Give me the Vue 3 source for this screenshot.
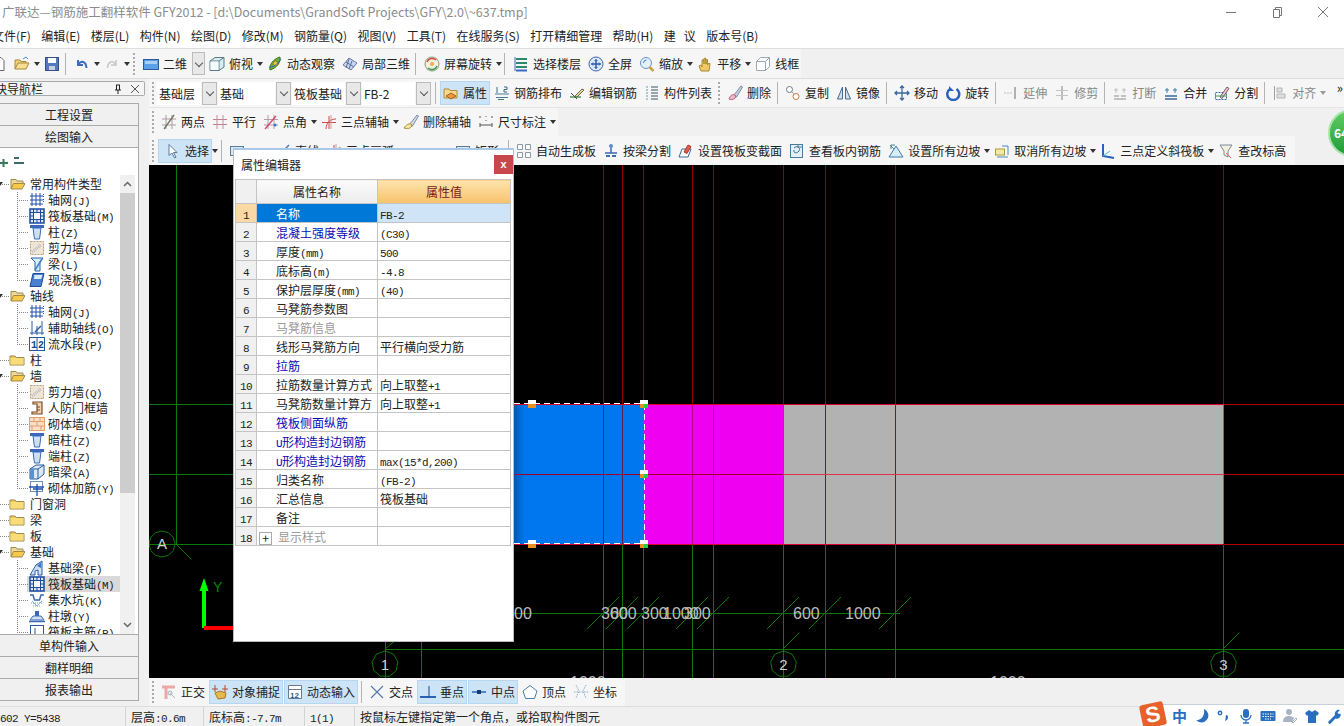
<template>
  <div class="app">
    <div class="titlebar">
      <span class="title">广联达—钢筋施工翻样软件 GFY2012 - [d:\Documents\GrandSoft Projects\GFY\2.0\~637.tmp]</span>
      <div class="winbtns">
        <svg width="12" height="12" viewBox="0 0 12 12"><path d="M1 6.5h10" stroke="#777" fill="none" /></svg>
        <svg width="12" height="12" viewBox="0 0 12 12"><path d="M2.5 3.5h6v8h-6zM4.5 3.5v-2h6v8h-2" stroke="#777" fill="none" /></svg>
        <svg width="12" height="12" viewBox="0 0 12 12"><path d="M1 1l10 10M11 1L1 11" stroke="#777" fill="none" /></svg>
      </div>
    </div>
    <div class="menubar">
      <span v-for="m in menus" :key="m" class="menu-item">{{ m }}</span>
    </div>
    <div class="row-top">
      <div class="toolbar tb1">
        <template v-for="(it, i) in row1" :key="i">
          <span v-if="it.sep" class="sep"></span>
          <span v-else-if="it.grip" class="grip"></span>
          <div v-else class="item" :class="{ on: it.on, off: it.off, arrowed: it.arrow || it.drop }">
            <Ico :n="it.icon" />
            <span v-if="it.text">{{ it.text }}</span>
            <span v-if="it.arrow" class="arrow"></span>
            <span v-if="it.drop" class="drop"><i></i></span>
          </div>
        </template>
      </div>
    </div>

    <div class="body">
      <aside class="nav">
        <div class="nav-head">
          <span class="nav-title">模块导航栏</span>
          <span class="pin">
            <svg width="10" height="10" viewBox="0 0 10 10"><path d="M3 1h4M3.5 1v5M6.5 1v5M2 6h6M5 6v4" stroke="#222" fill="none" /></svg>
            <svg width="10" height="10" viewBox="0 0 10 10"><path d="M1 1l8 8M9 1L1 9" stroke="#555" fill="none" /></svg>
          </span>
        </div>
        <div class="nav-box">
          <div class="nav-btn">工程设置</div>
          <div class="nav-btn">绘图输入</div>
          <div class="tree-tools">
            <svg width="36" height="14" viewBox="0 0 36 14"><path d="M-1 8h9M3.500 4v8" stroke="#3a7a5a" stroke-width="2" fill="none" /><path d="M14 3h5M14 8h10" stroke="#3a6a6a" stroke-width="2" fill="none" /></svg>
          </div>
          <div class="tree-wrap">
            <div class="tree">
              <div v-for="(n, i) in tree" :key="i" class="tree-row" :class="{ sel: n.sel }">
                <template v-if="n.folder">
                  <span class="expander" :class="{ open: n.open }"></span>
                  <Ico :n="n.open ? 'folderOpen' : 'folder'" />
                  <span class="folder-name"><Mix :t="n.folder" /></span>
                </template>
                <template v-else>
                  <span class="conn" :class="{ last: n.last }"></span>
                  <Ico :n="n.icon" />
                  <span class="leaf-name"><Mix :t="n.name" /></span>
                </template>
              </div>
            </div>
            <div class="scroll">
              <span class="scroll-up"><svg width="9" height="6" viewBox="0 0 9 6"><path d="M1 5l3.500-3.500L8 5" stroke="#666" stroke-width="1.500" fill="none" /></svg></span>
              <span class="scroll-thumb"></span>
              <span class="scroll-track"></span>
              <span class="scroll-down"><svg width="9" height="6" viewBox="0 0 9 6"><path d="M1 1l3.500 3.500L8 1" stroke="#666" stroke-width="1.500" fill="none" /></svg></span>
            </div>
          </div>
          <div class="nav-btn low">单构件输入</div>
          <div class="nav-btn low">翻样明细</div>
          <div class="nav-btn low">报表输出</div>
        </div>
      </aside>

      <main class="main">
        <div class="toolbar tb2">
          <template v-for="(it, i) in row2" :key="i">
            <span v-if="it.sep" class="sep"></span>
            <span v-else-if="it.grip" class="grip"></span>
            <div v-else-if="it.combo" class="combo">
              <span class="combo-text" :style="{ width: it.w + 'px' }">{{ it.combo }}</span>
              <span class="drop"><i></i></span>
            </div>
            <div v-else class="item" :class="{ on: it.on, off: it.off, arrowed: it.arrow }">
              <Ico :n="it.icon" />
              <span v-if="it.text">{{ it.text }}</span>
              <span v-if="it.arrow" class="arrow"></span>
            </div>
          </template>
          <span class="more">»</span>
        </div>
        <div class="toolbar tb3">
          <span class="grip"></span>
          <div v-for="it in row3" :key="it.text" class="item" :class="{ arrowed: it.arrow }">
            <Ico :n="it.icon" />
            <span>{{ it.text }}</span>
            <span v-if="it.arrow" class="arrow"></span>
          </div>
        </div>
        <div class="toolbar tb4">
          <span class="grip"></span>
          <template v-for="(it, i) in row4" :key="i">
            <span v-if="it.sep" class="sep"></span>
            <span v-else-if="it.gap" class="gap" :style="{ width: it.gap + 'px' }"></span>
            <span v-else-if="it.lone" class="arrow lone"></span>
            <div v-else class="item" :class="{ on: it.on, wide: it.on, arrowed: it.arrow }">
              <Ico :n="it.icon" />
              <span v-if="it.text">{{ it.text }}</span>
              <span v-if="it.arrow" class="arrow"></span>
            </div>
          </template>
        </div>

        <svg class="canvas" width="1195" height="513" viewBox="149 165 1195 513">
          <defs>
            <linearGradient id="blueShade" x1="0" x2="1" y1="0" y2="0">
              <stop offset="0" stop-color="#0058a8" />
              <stop offset="0.08" stop-color="#0077ee" />
              <stop offset="1" stop-color="#0077ee" />
            </linearGradient>
          </defs>
          <rect x="514" y="404" width="130" height="140" fill="url(#blueShade)" />
          <rect x="644" y="404" width="139" height="140" fill="#f000f0" />
          <rect x="783" y="404" width="440" height="140" fill="#b2b2b2" />

          <g fill="none">
            <path v-for="x in gridX" :key="'u' + x" :d="`M${x}.5 165V404`" stroke="#960000" />
            <path v-for="x in gridX" :key="'d' + x" :d="`M${x}.5 545V678`" stroke="#0a780a" />
            <path d="M603.500 404V544M622.500 404V544" stroke="#552050" />
            <path d="M692.500 404V544M713.500 404V544" stroke="#b80080" />
            <path d="M825.500 404V544M895.500 404V544" stroke="#901010" />
            <path d="M783.500 404V544" stroke="#ff1040" />
            <path d="M1223.500 404V544" stroke="#ff3050" />
            <path d="M514 404.500H1223M514 544.500H1223" stroke="#d8002a" />
            <path d="M514 474.500H783" stroke="#a00028" />
            <path d="M783 474.500H1223" stroke="#e0304a" />
            <path d="M1224 404.500H1344M1224 474.500H1344M1224 544.500H1344" stroke="#b80000" />
            <path d="M149 404.500H233M149 474.500H233M149 544.500H233M176.500 165V544" stroke="#0a780a" />
            <path d="M514 613.500H900M385 649.500H1344M385.500 641V678M421.500 641V678" stroke="#0a780a" />
          </g>
          <g stroke="#0a780a" fill="none">
            <path v-for="x in tickX" :key="'t' + x" :d="`M${x - 16} 629L${x + 16} 597`" />
            <path d="M783 649l16-16M1223 649l16-16M385 649l12-10M176 544l15 15" />
            <polygon :points="ring(162, 544, 12)" />
            <polygon :points="ring(385, 664, 9)" />
            <polygon :points="ring(783.5, 664, 9)" />
            <polygon :points="ring(1223.5, 664, 9)" />
          </g>
          <g class="dim">
            <text v-for="d in dims" :key="d.x + d.t" :x="d.x" y="619">{{ d.t }}</text>
            <text x="570" y="688">1000</text>
            <text x="990" y="688">1000</text>
          </g>
          <g class="bubble">
            <text x="162" y="549">A</text>
            <text x="385" y="670">1</text>
            <text x="783.500" y="670">2</text>
            <text x="1223.500" y="670">3</text>
          </g>

          <path d="M514 403.500H644M514 543.500H644M644.500 404V544" stroke="#fff" stroke-dasharray="6 4" fill="none" />
          <g v-for="p in handles" :key="p.x + '-' + p.y">
            <rect :x="p.x - 4" :y="p.y - 4" width="8" height="4" fill="#fff" />
            <rect :x="p.x - 4" :y="p.y" width="4" height="4" fill="#e89020" />
            <rect :x="p.x" :y="p.y" width="4" height="4" :fill="p.g ? '#20d040' : '#e89020'" />
          </g>

          <path d="M204 628V588" stroke="#00ff00" stroke-width="4" fill="none" />
          <path d="M204 578l-4.500 13h9z" fill="#00ff00" />
          <path d="M204 628h30" stroke="#ff0000" stroke-width="4" fill="none" />
          <text class="axis-y" x="213" y="592">Y</text>
        </svg>

        <div class="toolbar tb5">
          <span class="grip"></span>
          <template v-for="(it, i) in row5" :key="i">
            <span v-if="it.sep" class="sep"></span>
            <div v-else class="item" :class="{ on: it.on }">
              <Ico :n="it.icon" />
              <span>{{ it.text }}</span>
            </div>
          </template>
        </div>
      </main>
    </div>

    <footer class="status">
      <span class="seg first"><Mix t="602 Y=5438" /></span>
      <span class="seg"><Mix t="层高:0.6m" /></span>
      <span class="seg"><Mix t="底标高:-7.7m" /></span>
      <span class="seg"><Mix t="1(1)" /></span>
      <span class="seg">按鼠标左键指定第一个角点，或拾取构件图元</span>
    </footer>

    <div class="badge">64</div>

    <section class="dialog">
      <header class="dlg-head">
        <span>属性编辑器</span>
        <button class="dlg-close">x</button>
      </header>
      <table class="props">
        <colgroup><col class="c1" /><col class="c2" /><col class="c3" /></colgroup>
        <thead>
          <tr>
            <th class="num"></th>
            <th class="th-name">属性名称</th>
            <th class="th-val">属性值</th>
          </tr>
        </thead>
        <tbody>
          <tr v-for="(r, i) in props" :key="i" :class="{ cur: i === 0 }">
            <td class="num"><Mix :t="String(i + 1)" /></td>
            <td class="name" :class="r.c">
              <span v-if="r.plus" class="plus">+</span><Mix :t="r.n" />
            </td>
            <td class="val"><Mix :t="r.v || ''" /></td>
          </tr>
        </tbody>
      </table>
    </section>

    <div class="ime">
      <span class="ime-logo">S</span>
      <span class="ime-zh">中</span>
      <svg v-for="g in imeIcons" :key="g" width="16" height="16" viewBox="0 0 16 16" v-html="g"></svg>
    </div>
  </div>
</template>

<script setup>
import { h } from 'vue'

const icons = {
  doc: '<path d="M3 1.500h7l3 3v10H3z" fill="#fff" stroke="#667"/>',
  open: '<path d="M1 13V4h5l1 1.500h5V8" fill="#f2d27a" stroke="#a88a3a"/><path d="M1 13l3-6h11l-3 6z" fill="#f7de90" stroke="#a88a3a"/><path d="M9 3l3-2 2 2" stroke="#4a8ad0" fill="none"/>',
  save: '<rect x="1.500" y="1.500" width="13" height="13" fill="#5577bb" stroke="#334f88"/><rect x="4" y="2" width="8" height="5" fill="#fff"/><rect x="5" y="10" width="6" height="4" fill="#c8d0e0"/>',
  undo: '<path d="M4 4v5h5M4.500 8.500C7 4 12 5 12.500 12" stroke="#3c6cc0" stroke-width="2" fill="none"/>',
  redo: '<path d="M12 4v5H7M11.500 8.500C9 4 4 5 3.500 12" stroke="#c6c6c6" stroke-width="1.500" fill="none"/>',
  rect2d: '<rect x="0.500" y="3.500" width="15" height="10" fill="#5aa0e8" stroke="#2a5a9a"/><rect x="2" y="5" width="12" height="3" fill="#a8d0f4"/>',
  cube: '<path d="M1 5l5-3.500h9V11l-5 3.500H1z" fill="#d8eef4" stroke="#5a7a88"/><path d="M1 5h9v9.500M10 5l5-3.500" stroke="#5a7a88" fill="none"/><rect x="1.500" y="5.500" width="8" height="8.500" fill="#f4fbfd"/>',
  orbit: '<path d="M3 14C2 9 6 3 13 1c1 5-3 11-10 13z" fill="#6ab23a" stroke="#3a7a1a"/><circle cx="8.500" cy="7.500" r="2.500" fill="#e8c84a" stroke="#8a7a1a"/><path d="M2 11c3 1 8-2 12-8" stroke="#2a6aba" fill="none"/>',
  part3d: '<path d="M1 9l6-7 8 5-6 7z" fill="#c8d4ec" stroke="#6a7aa8"/><path d="M4 6l8 5M7 3l-3 9M10 5l-3 8" stroke="#5a6ea0" fill="none"/>',
  rotscreen: '<circle cx="8" cy="8" r="7" fill="#f4efe0" stroke="#8a9a7a"/><path d="M3 6a5.500 5.500 0 0 1 9-2" stroke="#d04a3a" stroke-width="1.500" fill="none"/><path d="M13 10a5.500 5.500 0 0 1-9 2" stroke="#3a9a5a" stroke-width="1.500" fill="none"/><circle cx="8" cy="8" r="2" fill="#e8b04a"/>',
  floors: '<path d="M3 3h11M3 7h11M3 11h11" stroke="#2a8a6a" stroke-width="2"/><path d="M3 14.500h11" stroke="#3a6ac0" stroke-width="2"/><path d="M2 1v14" stroke="#3a6ac0"/>',
  full: '<circle cx="8" cy="8" r="7" fill="#dce8f8" stroke="#3a68b0"/><path d="M8 3.500v9M3.500 8h9" stroke="#2a58a8" stroke-width="1.500"/><path d="M6.500 5L8 3.500 9.500 5M6.500 11L8 12.500 9.500 11M5 6.500L3.500 8 5 9.500M11 6.500L12.500 8 11 9.500" stroke="#2a58a8" fill="none"/>',
  zoomi: '<circle cx="7" cy="7" r="5.500" fill="#e4f0fc" stroke="#6a94c8"/><path d="M10.500 11l4 4" stroke="#c8a040" stroke-width="2.500"/><path d="M4.500 7a3 3 0 0 1 3-3" stroke="#3a78c8" fill="none"/>',
  pan: '<path d="M4 15l-2-5 2-1 1 2V4l1.500-.5L7 8V2.500L8.500 2 9 8V3.500l1.500.2V9l1.500-2 1 .5L12 15z" fill="#f0c868" stroke="#a88a30"/>',
  wire: '<path d="M1.500 5.500l4-4h9v9l-4 4h-9zM1.500 5.500h9v9M10.500 5.500l4-4" fill="#fff" stroke="#9aa8b4"/>',
  attr: '<path d="M1 13V4h5l1 1.500h7V13z" fill="#f6d88a" stroke="#b08a38"/><path d="M3 11l5-3 5 3-5 3z" fill="#e89a3a" stroke="#a8602a"/>',
  layout: '<path d="M1 9h14M2 12.500h12" stroke="#4a7a9a" fill="none"/><path d="M3 2v6M10 2h3v2.500h-3V7h3" stroke="#3a6a8a" fill="none"/><path d="M4 14.500h6" stroke="#3a8a6a"/>',
  edit: '<path d="M1 12h11" stroke="#4a9a5a" stroke-width="1.500"/><path d="M6 11l7-7 2 1-7 7z" fill="#e8d8a0" stroke="#6a6a4a"/><path d="M2 8l6 6" stroke="#444"/>',
  list: '<path d="M2 2h2M2 5h2M2 8h2M2 11h2M2 14h2" stroke="#8ac0c8" stroke-width="1.500"/><path d="M7 2h7M7 5h7M7 8h7M7 11h7M7 14h7" stroke="#7a8a98" stroke-width="1.500"/>',
  del: '<path d="M7 10l7-9 1.500 1-6 10z" fill="#c8d0e0" stroke="#7a8aa8"/><path d="M2 14c1-4 4-5 6-4l1 2c-2 3-5 3-7 2z" fill="#e8b8c8" stroke="#c05a7a"/>',
  copy: '<circle cx="4.500" cy="4.500" r="3" fill="#fff" stroke="#6a7a8a"/><circle cx="11" cy="11.500" r="3" fill="#fff" stroke="#d07a3a"/><path d="M7 7l2 2" stroke="#6a7a8a" stroke-dasharray="1 1"/>',
  mirror: '<path d="M6.500 2L1.500 14h5zM9.500 2l5 12h-5z" fill="#cfe0f0" stroke="#4a6a8a"/>',
  move: '<path d="M8 1v14M1 8h14M6 3l2-2 2 2M6 13l2 2 2-2M3 6L1 8l2 2M13 6l2 2-2 2" stroke="#3a6a9a" stroke-width="1.300" fill="none"/>',
  rotate: '<path d="M5 4a6 6 0 1 0 6.500 0" stroke="#2a62c0" stroke-width="2.500" fill="none"/><path d="M4 1v5h5" fill="#2a62c0"/>',
  extend: '<path d="M1 8h8" stroke="#bbb" stroke-dasharray="2 1"/><path d="M12 2v12" stroke="#9a9a9a" stroke-width="1.500"/>',
  trim: '<path d="M8 1v14" stroke="#a8a8a8" stroke-width="1.500"/><path d="M2 5.500h12M2 10.500h12" stroke="#c4c4c4"/>',
  breakI: '<path d="M2 11h5M9 11h5M2 14h12" stroke="#b0b0b0" stroke-width="1.500"/><path d="M4 3v5M12 3v5M2 5h4M10 5h4" stroke="#c0c0c0"/>',
  merge: '<path d="M2 11h12M2 14h12" stroke="#3a6a9a" stroke-width="1.500"/><path d="M4 3v5M12 3v5M2 5h4M10 5h4" stroke="#3a7ab8"/>',
  split: '<rect x="1.500" y="7.500" width="11" height="7" fill="none" stroke="#3a6ab0" stroke-dasharray="2 1"/><path d="M6 12l7-10 2 1.500-7 10z" fill="#e8c8d0" stroke="#7a5a6a"/><path d="M1 11h12" stroke="#3a9a5a"/>',
  align: '<path d="M2.500 1v14" stroke="#a0a0a0"/><path d="M5 3h5v4H5zM5 9h8v4H5z" fill="#e0e0e0" stroke="#b4b4b4"/>',
  twop: '<path d="M1 5h14M1 11h14M5 1v14M11 1v14" stroke="#b09aa0"/><path d="M3 15L13 1" stroke="#6a7a5a" stroke-width="1.300"/>',
  para: '<path d="M1 5.500h14M1 10.500h14" stroke="#c08090"/><path d="M5 1v14M11 1v14" stroke="#c890a0"/>',
  angle: '<path d="M1 5.500h14M1 11h14M5 1v14M11 1v14" stroke="#b89aa8"/><path d="M2 15L13 2" stroke="#d04a6a" stroke-width="1.300"/><circle cx="12" cy="11" r="1.500" fill="#3a7ac0"/>',
  three: '<path d="M1 8.500h14M8 2v13M5 15c0-6 4-10 10-10" stroke="#d04a4a" fill="none"/><path d="M10 1v14" stroke="#c0a0a0"/>',
  delaux: '<path d="M7 10l7-9 1.500 1-6 10z" fill="#d8dce4" stroke="#7a8aa8"/><path d="M1 14c2-3 5-5 7-4l1 2c-2 3-5 3-8 2z" fill="#f0e4a0" stroke="#a88a30"/>',
  dimI: '<path d="M2 2v2M14 2v2M2 13v-4M14 13v-4M2 11h12" stroke="#555" fill="none"/><path d="M8 2v1M8 6v1" stroke="#3a8a5a"/>',
  select: '<path d="M4 1.500v11l3-2.500 2.500 5 1.500-.8L8.500 9.500H12z" fill="#fff" stroke="#5a7a9a"/>',
  rectI: '<rect x="1.500" y="3.500" width="13" height="9" fill="#dce8f4" stroke="#5a7a9a"/>',
  line: '<path d="M2 14L14 2" stroke="#4a78b0" stroke-width="1.500"/>',
  auto: '<path d="M1.500 1.500h5v5h-5zM9.500 1.500h5v5h-5zM1.500 9.500h5v5h-5zM9.500 9.500h5v5h-5z" fill="#fff" stroke="#8a9aa8"/>',
  bsplit: '<circle cx="8" cy="3" r="2" fill="#5a8ad0"/><path d="M8 5v5M2 10h12" stroke="#3a6ab0" stroke-width="1.500"/><path d="M3 13h4M9 13h4" stroke="#3a6ab0" stroke-width="2"/>',
  section: '<path d="M1 14l3-8h9l-3 8z" fill="#fff" stroke="#3a6a9a"/><path d="M6 9l4-7 3 1.500-4 7z" fill="#e85a4a" stroke="#a83a2a"/>',
  view: '<rect x="1.500" y="1.500" width="12" height="13" fill="#e4f0f8" stroke="#4a7a9a"/><path d="M5 5c3-3 7 0 5 3s-6 2-5-1" stroke="#3a6a8a" fill="none"/><path d="M9 1v3h4" stroke="#4a7a9a" fill="none"/>',
  slope: '<path d="M1 14h14L8 3z" fill="#d8ecf8" stroke="#3a7ab0"/><path d="M2 2l4 4M3 6V2h4" stroke="#3a8a9a" fill="none"/>',
  cancel: '<rect x="1.500" y="6" width="9" height="6" fill="#f4e8a8" stroke="#a89a3a"/><path d="M8 3h6v9" stroke="#4a8ab0" fill="none"/><path d="M3 14h11" stroke="#4a8ab0"/>',
  threeP: '<path d="M3 1v12l11 2" stroke="#2a62b8" stroke-width="2" fill="none"/><path d="M3 13L10 8" stroke="#3ac0d8"/>',
  elev: '<path d="M2 2h12L10 8v6L6 12V8z" fill="#f4f0e0" stroke="#7a8a9a"/><path d="M8 10l5 5" stroke="#e85a4a"/>',
  ortho: '<path d="M1 3h13M5 3v12" stroke="#eaa8a8" stroke-width="3"/><path d="M9 9l5 5" stroke="#b0b0b0"/><circle cx="9" cy="9" r="2" fill="none" stroke="#9ab0c0"/>',
  snap: '<path d="M3 1v7M13 1v7M0 5h6M10 5h6" stroke="#b84a2a"/><path d="M3 9l5-2 6 2-1 5-7 1z" fill="#e8b850" stroke="#a87a20"/>',
  dyn: '<path d="M1.500 1.500h13v13h-13zM1.500 5.500h13" fill="#fff" stroke="#6a7a8a"/><text x="3" y="13.500" font-size="8" font-weight="700" fill="#2a5a9a" font-family="Liberation Sans">12</text>',
  cross: '<path d="M2 2l12 12M14 2L2 14" stroke="#5a80a8" stroke-width="1.300"/>',
  perp: '<path d="M0 13h16" stroke="#2a62b8" stroke-width="2"/><path d="M9 2v11" stroke="#1a4a8a"/>',
  mid: '<path d="M1 8h14" stroke="#2a62b8" stroke-width="1.500"/><rect x="6" y="6" width="4" height="4" fill="#143a78"/>',
  vertex: '<path d="M8 1.500l7 5.500-2.500 7.500h-9L1 7z" fill="#fff" stroke="#4a80b0"/>',
  coord: '<path d="M3 1l3 6-3 7M13 1l-3 6 3 7M1 8h14" stroke="#80b0c8" stroke-dasharray="1.500 1" fill="none"/>',
  folder: '<path d="M1 13V4h5l1.500 1.500H15V13z" fill="#f2c64a" stroke="#9a8a50"/><rect x="1.500" y="6" width="13" height="6.500" fill="#f8dc78"/>',
  folderOpen: '<path d="M2 13V3.500h5l1 1.500h6v3" fill="#f0d890" stroke="#a08a50"/><path d="M2 13l2.500-5.500H16L13 13z" fill="#f8c848" stroke="#a08a50"/>',
  grid: '<path d="M3 1v13M7 1v13M11 1v13M1 4h13M1 8h13M1 12h13" stroke="#2050a8"/><path d="M14.500 2v3M14.500 7v3" stroke="#2050a8" stroke-dasharray="1 1"/>',
  raft: '<rect x="1" y="1" width="14" height="14" fill="#dbe8f8" stroke="#1a4a98" stroke-width="1.500"/><rect x="4.500" y="4.500" width="7" height="7" fill="#fff" stroke="#1a4a98"/><path d="M1 4.500h3M12 4.500h3M1 8h3M12 8h3M1 11.500h3M12 11.500h3M4.500 1v3M8 1v3M11.500 1v3M4.500 12v3M8 12v3M11.500 12v3" stroke="#1a4a98"/>',
  col: '<path d="M1 1h14v3H1z" fill="#3a68b8"/><path d="M4 4h8L10.500 15h-5z" fill="#cfe0f4" stroke="#3a68b8"/>',
  wall: '<rect x="1.500" y="1.500" width="13" height="13" fill="#efe4d8" stroke="#c09a70" stroke-dasharray="2 1"/><path d="M3 12l9-7" stroke="#bcbcbc" stroke-width="3" stroke-dasharray="1 1"/>',
  beam: '<path d="M2 2h12L11 6v9H6V6z" fill="#d8ecf8" stroke="#2a62a8"/><path d="M6 14L13 3" stroke="#3a80c8" stroke-width="1.500"/>',
  slab: '<path d="M4 1.500h11L12 14.500H1z" fill="#4a80d0" stroke="#1a4a98"/><path d="M5.500 3h8L12 7H5z" fill="#dcebfa"/>',
  aux: '<path d="M3 1v14M8 6v9M13 1v14M1 13h14" stroke="#2a5aa8"/><path d="M6 12l6-6" stroke="#2a5aa8" stroke-width="1.500"/>',
  num12: '<rect x="0.500" y="1.500" width="15" height="13" fill="#fff" stroke="#2a5a9a"/><path d="M8 1.500v13" stroke="#2a5a9a"/><text x="2" y="12" font-size="10" font-weight="700" fill="#1a4a8a" font-family="Liberation Mono">1</text><text x="9" y="12" font-size="10" font-weight="700" fill="#1a4a8a" font-family="Liberation Mono">2</text>',
  door: '<path d="M4 2h9v12H3v-2h5V4H4z" fill="#f0d4b0" stroke="#7a4a2a" stroke-width="1.200"/><path d="M8 7h3M8 10h3" stroke="#7a4a2a"/>',
  brick: '<rect x="0.500" y="1.500" width="15" height="13" fill="#f8e0c8" stroke="#e0a070"/><path d="M1 5.500h14M1 10h14M5 1.500v4M11 1.500v4M8 5.500V10M3 10v4.500M12 10v4.500" stroke="#e0a070"/>',
  hbeam: '<path d="M1 5l6-4h8v9l-6 5H1z" fill="#dce8f4" stroke="#2a5a9a"/><path d="M1 5h8v10M9 5l6-4" stroke="#2a5a9a" fill="none"/><rect x="1" y="5" width="4" height="10" fill="#5a90d0"/>',
  rebar: '<rect x="1.500" y="1.500" width="12" height="10" fill="#fff" stroke="#6a90b8"/><path d="M8 4v12M4 9h10M0 7h15" stroke="#1a50b0" stroke-width="1.300"/>',
  fbeam: '<path d="M1 15l6-10 6-4v14h-4v-5l-3 1v4z" fill="#cfe0f4" stroke="#2a5aa8"/><path d="M8 6l4-4v6z" fill="#3a78c8"/>',
  pit: '<path d="M1 3h3l1.500 5h5L12 3h3" stroke="#3a6ab8" stroke-width="1.500" fill="none"/><path d="M2 11h12M4 14h8" stroke="#6a9ad8" stroke-dasharray="1 1"/><path d="M3 9l5 5 5-5" stroke="#7aa8e0" fill="none"/>',
  pier: '<path d="M6 3h4v5H6z" fill="#3a68b8"/><path d="M1 12l3-4h8l3 4z" fill="#d0dff2" stroke="#3a68b8"/><path d="M0 13.500h16" stroke="#3a68b8" stroke-width="1.500"/>',
  main: '<rect x="1.500" y="1.500" width="13" height="13" fill="#fff" stroke="#2a5a9a"/><path d="M6 4v7h4" stroke="#2a5a9a" fill="none"/>'
}

const Ico = (p) => h('svg', { class: 'ico', width: 16, height: 16, viewBox: '0 0 16 16', innerHTML: icons[p.n] || '' })
Ico.props = ['n']

// half-width latin like the GDI font of the original
const Mix = (p) =>
  h('span', (p.t.match(/[\x00-\x7f]+|[^\x00-\x7f]+/g) || []).map((r) =>
    /^[\x00-\x7f]/.test(r) ? h('span', { class: 'lat' }, r) : r
  ))
Mix.props = ['t']

const ring = (cx, cy, n) =>
  Array.from({ length: n }, (_, i) => {
    const a = (i / n) * Math.PI * 2 - Math.PI / 2
    return `${(cx + 13 * Math.cos(a)).toFixed(1)},${(cy + 13 * Math.sin(a)).toFixed(1)}`
  }).join(' ')

const menus = ['文件(F)', '编辑(E)', '楼层(L)', '构件(N)', '绘图(D)', '修改(M)', '钢筋量(Q)', '视图(V)', '工具(T)', '在线服务(S)', '打开精细管理', '帮助(H)', '建   议', '版本号(B)']

const row1 = [
  { icon: 'doc' },
  { icon: 'open', arrow: true },
  { icon: 'save' },
  { sep: true },
  { icon: 'undo', arrow: true },
  { icon: 'redo', arrow: true },
  { grip: true },
  { icon: 'rect2d', text: '二维', drop: true },
  { icon: 'cube', text: '俯视', arrow: true },
  { icon: 'orbit', text: '动态观察' },
  { icon: 'part3d', text: '局部三维' },
  { sep: true },
  { icon: 'rotscreen', text: '屏幕旋转', arrow: true },
  { sep: true },
  { icon: 'floors', text: '选择楼层' },
  { icon: 'full', text: '全屏' },
  { icon: 'zoomi', text: '缩放', arrow: true },
  { icon: 'pan', text: '平移', arrow: true },
  { icon: 'wire', text: '线框' }
]

const row2 = [
  { grip: true },
  { combo: '基础层', w: 44 },
  { combo: '基础', w: 57 },
  { combo: '筏板基础', w: 53 },
  { combo: 'FB-2', w: 53 },
  { sep: true },
  { icon: 'attr', text: '属性', on: true },
  { icon: 'layout', text: '钢筋排布' },
  { icon: 'edit', text: '编辑钢筋' },
  { icon: 'list', text: '构件列表' },
  { grip: true },
  { icon: 'del', text: '删除' },
  { sep: true },
  { icon: 'copy', text: '复制' },
  { icon: 'mirror', text: '镜像' },
  { sep: true },
  { icon: 'move', text: '移动' },
  { icon: 'rotate', text: '旋转' },
  { sep: true },
  { icon: 'extend', text: '延伸', off: true },
  { icon: 'trim', text: '修剪', off: true },
  { sep: true },
  { icon: 'breakI', text: '打断', off: true },
  { icon: 'merge', text: '合并' },
  { icon: 'split', text: '分割' },
  { sep: true },
  { icon: 'align', text: '对齐', off: true, arrow: true }
]

const row3 = [
  { icon: 'twop', text: '两点' },
  { icon: 'para', text: '平行' },
  { icon: 'angle', text: '点角', arrow: true },
  { icon: 'three', text: '三点辅轴', arrow: true },
  { icon: 'delaux', text: '删除辅轴' },
  { icon: 'dimI', text: '尺寸标注', arrow: true }
]

// the middle of this row sits behind the dialog, only the top of it shows
const row4 = [
  { icon: 'select', text: '选择', on: true },
  { lone: true },
  { sep: true },
  { icon: 'rectI', arrow: true },
  { gap: 16 },
  { icon: 'line', text: '直线' },
  { icon: 'three', text: '三点画弧' },
  { gap: 54 },
  { icon: 'rectI', text: '矩形' },
  { gap: 3 },
  { sep: true },
  { icon: 'auto', text: '自动生成板' },
  { icon: 'bsplit', text: '按梁分割' },
  { icon: 'section', text: '设置筏板变截面' },
  { icon: 'view', text: '查看板内钢筋' },
  { icon: 'slope', text: '设置所有边坡', arrow: true },
  { icon: 'cancel', text: '取消所有边坡', arrow: true },
  { icon: 'threeP', text: '三点定义斜筏板', arrow: true },
  { icon: 'elev', text: '查改标高' }
]

const row5 = [
  { icon: 'ortho', text: '正交' },
  { icon: 'snap', text: '对象捕捉', on: true },
  { icon: 'dyn', text: '动态输入', on: true },
  { sep: true },
  { icon: 'cross', text: '交点' },
  { icon: 'perp', text: '垂点', on: true },
  { icon: 'mid', text: '中点', on: true },
  { icon: 'vertex', text: '顶点' },
  { icon: 'coord', text: '坐标' }
]

const folder = (name, open) => ({ folder: name, open })
const leaf = (name, icon, extra) => ({ name, icon, ...extra })

const tree = [
  folder('常用构件类型', true),
  leaf('轴网(J)', 'grid'),
  leaf('筏板基础(M)', 'raft'),
  leaf('柱(Z)', 'col'),
  leaf('剪力墙(Q)', 'wall'),
  leaf('梁(L)', 'beam'),
  leaf('现浇板(B)', 'slab', { last: true }),
  folder('轴线', true),
  leaf('轴网(J)', 'grid'),
  leaf('辅助轴线(O)', 'aux'),
  leaf('流水段(P)', 'num12', { last: true }),
  folder('柱'),
  folder('墙', true),
  leaf('剪力墙(Q)', 'wall'),
  leaf('人防门框墙', 'door'),
  leaf('砌体墙(Q)', 'brick'),
  leaf('暗柱(Z)', 'col'),
  leaf('端柱(Z)', 'col'),
  leaf('暗梁(A)', 'hbeam'),
  leaf('砌体加筋(Y)', 'rebar', { last: true }),
  folder('门窗洞'),
  folder('梁'),
  folder('板'),
  folder('基础', true),
  leaf('基础梁(F)', 'fbeam'),
  leaf('筏板基础(M)', 'raft', { sel: true }),
  leaf('集水坑(K)', 'pit'),
  leaf('柱墩(Y)', 'pier'),
  leaf('筏板主筋(R)', 'main')
]

const props = [
  { n: '名称', c: 'selname', v: 'FB-2' },
  { n: '混凝土强度等级', c: 'blue', v: '(C30)' },
  { n: '厚度(mm)', v: '500' },
  { n: '底标高(m)', v: '-4.8' },
  { n: '保护层厚度(mm)', v: '(40)' },
  { n: '马凳筋参数图' },
  { n: '马凳筋信息', c: 'gray' },
  { n: '线形马凳筋方向', v: '平行横向受力筋' },
  { n: '拉筋', c: 'blue' },
  { n: '拉筋数量计算方式', v: '向上取整+1' },
  { n: '马凳筋数量计算方', v: '向上取整+1' },
  { n: '筏板侧面纵筋', c: 'blue' },
  { n: 'U形构造封边钢筋', c: 'blue' },
  { n: 'U形构造封边钢筋', c: 'blue', v: 'max(15*d,200)' },
  { n: '归类名称', v: '(FB-2)' },
  { n: '汇总信息', v: '筏板基础' },
  { n: '备注' },
  { n: '显示样式', c: 'gray', plus: true }
]

const gridX = [603, 622, 643, 692, 713, 783, 825, 895, 1223]
const tickX = [603, 622, 643, 692, 713, 783, 825, 895]
const dims = [
  { x: 514, t: '00' },
  { x: 601, t: '300' },
  { x: 610, t: '600' },
  { x: 641, t: '300' },
  { x: 663, t: '1000' },
  { x: 684, t: '300' },
  { x: 793, t: '600' },
  { x: 845, t: '1000' }
]
const handles = [
  { x: 532, y: 404 },
  { x: 644, y: 404, g: true },
  { x: 644, y: 474, g: true },
  { x: 532, y: 544 },
  { x: 644, y: 544, g: true }
]

const imeIcons = [
  '<path d="M10 1a7 7 0 1 1-8 11c5 1 9-4 8-11z" fill="#2a6ec0"/>',
  '<circle cx="4" cy="5" r="1.700" fill="none" stroke="#2a6ec0" stroke-width="1.500"/><path d="M11 7c2 2 1 5-2 6l.8-3.500a1.800 1.800 0 0 1 1.200-2.500z" fill="#2a6ec0"/>',
  '<rect x="5" y="1" width="6" height="9" rx="3" fill="#2a6ec0"/><path d="M3 7a5 5 0 0 0 10 0M8 12v3M5 15h6" stroke="#2a6ec0" stroke-width="1.300" fill="none"/>',
  '<rect x="0.500" y="3" width="15" height="10" rx="1" fill="#2a6ec0"/><path d="M2.500 6h11M2.500 8.500h11M5 11h6" stroke="#fff" stroke-dasharray="1.500 1"/>',
  '<circle cx="7" cy="4" r="3" fill="#a8b4c4"/><path d="M1 14c0-5 3-6 6-6s4 1 5 2l-2 4z" fill="#a8b4c4"/><path d="M10 14l4-4 1 1-4 4z" fill="#fff" stroke="#a8b4c4"/>',
  '<path d="M5 2L1 5l2 3 1-1v8h8V7l1 1 2-3-4-3-3 2z" fill="#2a6ec0"/>',
  '<path d="M2 14l7-7a4 4 0 0 1 5-5l-2.500 2.500 1 1.500 2-.5a4 4 0 0 1-5 5l-6 6z" fill="#2a6ec0"/>'
]
</script>

<style scoped>
.app {
  position: relative;
  width: 1344px;
  height: 726px;
  overflow: hidden;
  display: flex;
  flex-direction: column;
  background: #f0f0f0;
  font-family: "Noto Sans CJK SC", "Noto Sans", sans-serif;
  font-size: 12px;
  line-height: 16px;
  color: #222;
}

.titlebar {
  height: 24px;
  flex: none;
  background: #fff;
  display: flex;
  align-items: center;
  justify-content: space-between;
  padding-left: 2px;
}
.title {
  color: #8c8c8c;
  font-size: 12.5px;
  white-space: pre;
}
.winbtns {
  display: flex;
  gap: 34px;
  padding-right: 15px;
}

.menubar {
  height: 25px;
  flex: none;
  background: #fff;
  display: flex;
  align-items: center;
  gap: 10.4px;
  margin-left: -8px;
  border-bottom: 1px solid #ddd;
  box-sizing: border-box;
  white-space: pre;
}

.row-top {
  height: 30px;
  flex: none;
  border-bottom: 1px solid #ddd;
  box-sizing: border-box;
}

.toolbar {
  display: flex;
  align-items: center;
  background: #f6f6f6;
  white-space: nowrap;
  box-sizing: border-box;
}
.tb1 {
  width: 801px;
  height: 29px;
}
.tb1 > .item:first-child {
  margin-left: -12px;
}
.tb1 .sep {
  margin: 0 4px 0 2px;
}
.tb1 .grip {
  margin-right: 4px;
}
.tb1 .drop {
  width: 11px;
}
.tb2 {
  height: 29px;
  overflow: hidden;
  position: relative;
  border-bottom: 1px solid #e4e4e4;
}
.tb3 {
  width: 409px;
  height: 28px;
}
.tb4 {
  width: 1146px;
  height: 29px;
}
.tb5 {
  width: 476px;
  height: 28px;
}

.item {
  display: flex;
  align-items: center;
  gap: 4px;
  height: 24px;
  padding: 0 3px;
  margin-left: 1px;
  flex: none;
}
.item.on {
  background: #cde4f7;
  box-shadow: inset 0 0 0 1px #b6d6f0;
}
.item.wide {
  padding: 0 3px 0 7px;
  margin-right: 0;
}
.item.off {
  color: #888;
}
.item.arrowed {
  padding-right: 0;
}
.arrow {
  width: 0;
  height: 0;
  border-left: 3.5px solid transparent;
  border-right: 3.5px solid transparent;
  border-top: 4px solid #333;
}
.arrow.lone {
  flex: none;
  margin-left: 0;
}
.off .arrow {
  border-top-color: #999;
}
.sep {
  width: 1px;
  height: 22px;
  margin: 0 3px;
  background: #b4b4b4;
  flex: none;
}
.grip {
  width: 2px;
  height: 22px;
  margin: 0 3px;
  flex: none;
  background: repeating-linear-gradient(to bottom, #aaa 0 2px, transparent 2px 4px);
}
.gap {
  flex: none;
}
.more {
  position: absolute;
  right: 1px;
  top: 1px;
  font-size: 13px;
  color: #222;
}

.combo {
  display: flex;
  align-items: center;
  height: 23px;
  margin-right: 1px;
  flex: none;
}
.combo-text {
  display: block;
  height: 23px;
  line-height: 23px;
  padding-left: 2px;
  background: #fff;
  box-sizing: border-box;
}
.drop {
  width: 13px;
  height: 21px;
  border: 1px solid #bbb;
  background: #e8e8e8;
  display: flex;
  align-items: center;
  justify-content: center;
  margin-left: 1px;
}
.drop i {
  width: 5px;
  height: 5px;
  border-right: 1px solid #555;
  border-bottom: 1px solid #555;
  transform: translateY(-1px) rotate(45deg);
}

.body {
  flex: 1;
  min-height: 0;
  display: flex;
}

.nav {
  width: 145px;
  flex: none;
  margin-right: 4px;
  padding-top: 2px;
}
.nav-head {
  height: 15px;
  box-sizing: border-box;
  border: 1px solid #aaa;
  border-left: 0;
  border-radius: 0 2px 2px 0;
  display: flex;
  align-items: center;
  justify-content: space-between;
  background: #f4f4f4;
  line-height: 13px;
  overflow: hidden;
}
.nav-title {
  margin-left: -17px;
  white-space: nowrap;
}
.pin {
  display: flex;
  gap: 7px;
  padding-right: 4px;
}
.nav-box {
  margin-top: 7px;
  width: 139px;
  height: 598px;
  border: 1px solid #aaa;
  border-left: 0;
  box-sizing: border-box;
  display: flex;
  flex-direction: column;
  background: #f0f0f0;
}
.nav-btn {
  height: 22px;
  box-sizing: border-box;
  line-height: 21px;
  text-align: center;
  border-bottom: 1px solid #aaa;
  flex: none;
}
.nav-btn.low {
  border-bottom: 0;
  border-top: 1px solid #aaa;
}
.tree-tools {
  height: 27px;
  background: #fff;
  flex: none;
  display: flex;
  align-items: center;
  box-sizing: border-box;
}
.tree-wrap {
  flex: 1;
  min-height: 0;
  display: flex;
  background: #fff;
}
.tree {
  flex: 1;
  min-width: 0;
  overflow: hidden;
  padding-top: 1px;
}
.tree-row {
  height: 16px;
  display: flex;
  align-items: center;
  white-space: nowrap;
}
.tree-row.sel {
  background: linear-gradient(to right, transparent 27px, #d9d9d9 27px);
}
.expander {
  width: 9px;
  height: 16px;
  flex: none;
  background: repeating-linear-gradient(to right, #888 0 1px, transparent 1px 2px) center / 100% 1px no-repeat;
}
.expander.open::before {
  content: "";
  display: block;
  margin: 6px 0 0 -3px;
  width: 0;
  border-left: 3px solid transparent;
  border-right: 3px solid transparent;
  border-top: 4px solid #333;
}
.folder-name {
  margin-left: 5px;
}
.conn {
  width: 11px;
  height: 16px;
  margin-left: 17px;
  margin-right: 1px;
  flex: none;
  background-image:
    repeating-linear-gradient(to bottom, #888 0 1px, transparent 1px 2px),
    repeating-linear-gradient(to right, #888 0 1px, transparent 1px 2px);
  background-size: 1px 100%, 100% 1px;
  background-position: left top, left center;
  background-repeat: no-repeat;
}
.conn.last {
  background-size: 1px 50%, 100% 1px;
}
.leaf-name {
  padding-left: 3px;
}
.scroll {
  width: 15px;
  margin-right: 3px;
  flex: none;
  display: flex;
  flex-direction: column;
  background: #f0f0f0;
}
.scroll-up,
.scroll-down {
  height: 18px;
  display: flex;
  align-items: center;
  justify-content: center;
  flex: none;
}
.scroll-thumb {
  height: 300px;
  background: #cdcdcd;
  flex: none;
}
.scroll-track {
  flex: 1;
}

.main {
  flex: 1;
  min-width: 0;
  display: flex;
  flex-direction: column;
}
.canvas {
  display: block;
  flex: none;
  background: #000;
}
.dim text {
  fill: #bdbdbd;
  font-family: "Liberation Sans", sans-serif;
  font-size: 16px;
}
.bubble text {
  fill: #d0d0d0;
  font-family: "Liberation Sans", sans-serif;
  font-size: 15px;
  text-anchor: middle;
}
.axis-y {
  fill: #0a8a0a;
  font-family: "Liberation Sans", sans-serif;
  font-size: 14px;
}

.status {
  height: 19px;
  flex: none;
  display: grid;
  grid-template-columns: 126px 78px 101px 50px 1fr;
  border-top: 1px solid #ddd;
  background: #f0f0f0;
  line-height: 19px;
}
.seg {
  padding-left: 5px;
  border-right: 1px solid #d4d4d4;
  white-space: nowrap;
}
.seg.first {
  padding-left: 0;
}
.seg:last-child {
  border-right: 0;
}

.badge {
  position: absolute;
  left: 1328px;
  top: 109px;
  width: 48px;
  height: 48px;
  box-sizing: border-box;
  border-radius: 50%;
  border: 2px solid #a6e4a6;
  background: linear-gradient(#62cc62, #1f9a3a);
  color: #fff;
  font-weight: 700;
  font-size: 12px;
  line-height: 44px;
  padding-left: 4px;
}

.dialog {
  position: absolute;
  left: 233px;
  top: 150px;
  width: 281px;
  height: 492px;
  box-sizing: border-box;
  background: #fff;
  border: 1px solid #bbb;
  border-top: 0;
  box-shadow: 0 -2px 0 #a8c8e8;
}
.dlg-head {
  height: 29px;
  display: flex;
  align-items: center;
  justify-content: space-between;
  padding-left: 7px;
}
.dlg-close {
  width: 19px;
  height: 19px;
  padding: 0;
  border: 0;
  background: #c8474a;
  color: #fff;
  font-family: "Liberation Sans", sans-serif;
  font-size: 11px;
  font-weight: 700;
  line-height: 17px;
}
.props {
  width: 276px;
  margin-left: 1px;
  border-collapse: collapse;
  table-layout: fixed;
  font-size: 12px;
}
.c1 {
  width: 21px;
}
.c2 {
  width: 121px;
}
.props th,
.props td {
  padding: 0;
  border: 1px solid #c4c4c4;
  height: 18px;
  line-height: 17px;
  white-space: nowrap;
  overflow: hidden;
}
.props th {
  height: 23px;
  font-weight: 400;
  background: linear-gradient(#fbfbfb, #ececec);
}
.props .th-val {
  background: linear-gradient(#fde3ae, #f8c26a);
  color: #7a1818;
}
.props .num {
  background: #f0f0f0;
  text-align: center;
}
.props .name {
  padding-left: 19px;
}
.props .val {
  padding-left: 2px;
}
.props .cur .num {
  background: #fbd9a4;
}
.props .cur .val {
  background: #cfe4f6;
}
.props .selname {
  background: #0078d7;
  color: #fff;
}
.props .blue {
  color: #0a0ab4;
}
.props .gray {
  color: #999;
}
.plus {
  display: inline-block;
  width: 11px;
  height: 11px;
  line-height: 10px;
  margin-left: -17px;
  margin-right: 6px;
  border: 1px solid #aaa;
  text-align: center;
  color: #222;
  vertical-align: -1px;
}

.ime {
  position: absolute;
  left: 1160px;
  top: 704px;
  width: 184px;
  height: 22px;
  background: #fff;
  border-top: 1px solid #c8d0dc;
  box-sizing: border-box;
  display: flex;
  align-items: center;
  gap: 6px;
  padding-left: 12px;
}
.ime-logo {
  position: absolute;
  left: -19px;
  top: -2px;
  width: 24px;
  height: 24px;
  background: #e8602a;
  border-radius: 3px;
  transform: rotate(-12deg);
  color: #fff;
  font: 700 22px/24px "Liberation Sans", sans-serif;
  text-align: center;
}
.ime-zh {
  color: #2a6ec0;
  font-size: 15px;
  font-weight: 700;
  margin-right: 1px;
}
</style>

<style>
.ico {
  display: block;
  flex: none;
}
.lat {
  font-family: "Liberation Mono", monospace;
  font-size: 11px;
  letter-spacing: -0.6px;
  line-height: 1;
}
</style>
